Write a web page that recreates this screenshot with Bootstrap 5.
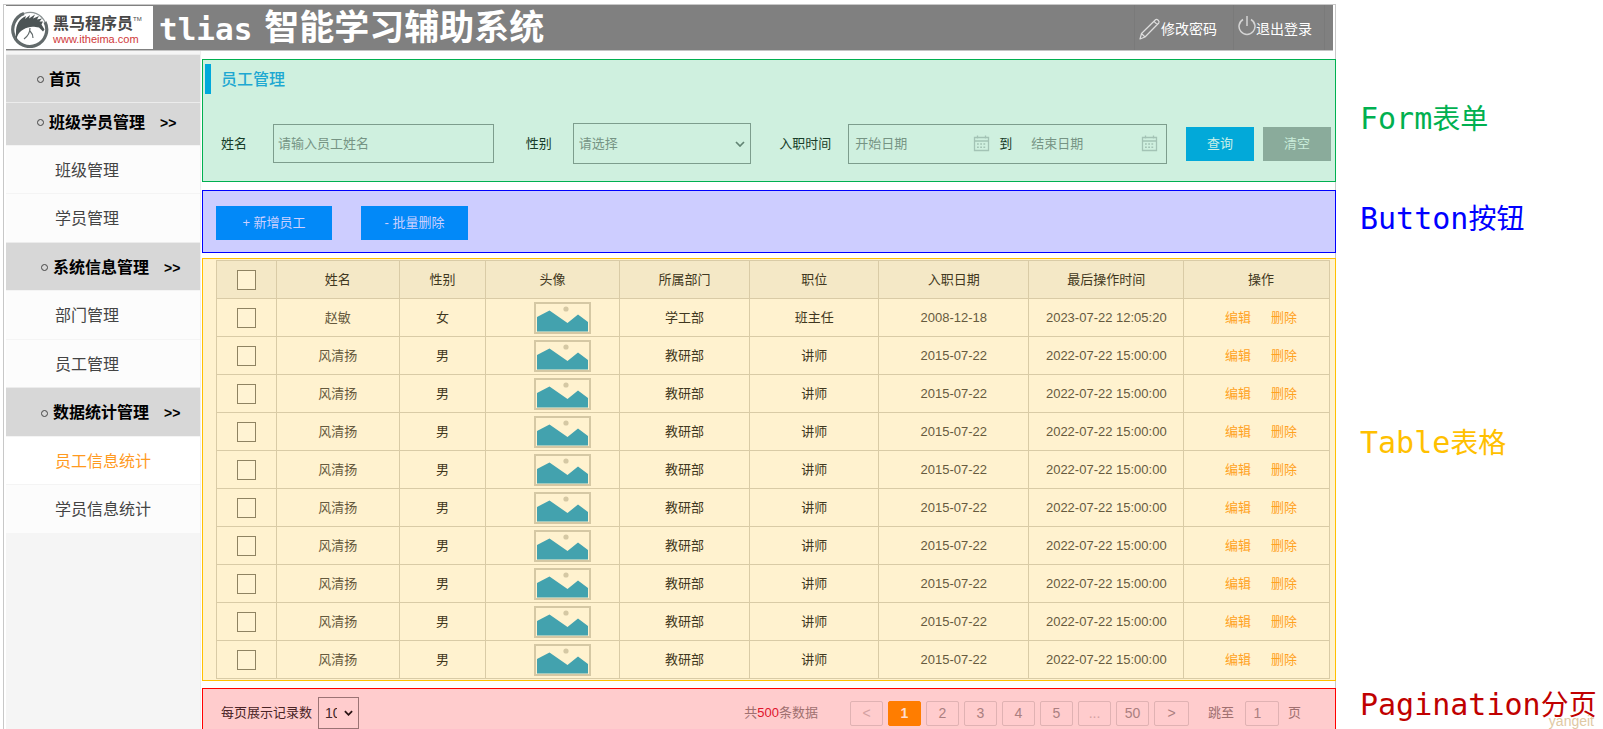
<!DOCTYPE html>
<html lang="zh-CN">
<head>
<meta charset="utf-8">
<meta name="viewport" content="width=device-width, initial-scale=1">
<title>tlias 智能学习辅助系统</title>
<link href="https://cdn.jsdelivr.net/npm/bootstrap@5.3.0/dist/css/bootstrap.min.css" rel="stylesheet">
<style>
  body { font-family: "Liberation Sans", "Noto Sans CJK SC", sans-serif; font-size: 13px; line-height: 20px; color: #222; background: #fff; }
  .frame { border: 1px solid #c8c8c8; border-bottom: 0; margin: 4px 0 0 3px; padding: 0 2px 0 2px; min-width: 0; }
  /* header */
  .topbar { background: #808080; height: 46px; border-bottom: 1px solid #c4c4c4; }
  .brand { background: #fff; width: 147px; padding: 2px 0 0 5px; gap: 4px; height: 43px; }
  .brand-name { font-size: 16px; line-height: 18px; font-weight: 700; color: #474747; padding-top: 4px; }
  .brand-name sup { font-size: 6px; font-weight: 400; top: -8px; }
  .brand-url { font-size: 11px; line-height: 13px; color: #cf3a3a; }
  .sys-title { color: #fff; font-weight: 700; font-size: 35px; line-height: 44px; margin-left: 6px; gap: 12px; }
  .sys-title .latin { font-family: "DejaVu Sans Mono", monospace; font-size: 31px; padding-top: 2px; }
  .top-link { color: #fff; font-size: 14px; text-decoration: none; border-left: 1px solid #7a7a7a; height: 45px; padding-top: 2px; }
  .top-link:hover { color: #fff; }
  /* sidebar */
  .side { width: 195px; background: #f5f5f5; border-right: 1px solid #eee; padding-top: 3px; }
  .side a { height: 48px; font-size: 16px; color: #444; text-decoration: none; padding: 2px 0 0 49px; background: #fcfcfc; border-top: 1px solid #f4f4f4; display: flex; align-items: center; }
  .side a:nth-child(even) { height: 49px; }
  .side a.head { background: #d7d7d7; color: #000; font-weight: 700; padding-left: 35px; border-top-color: #ececec; }
  .side a.head.outer { padding-left: 31px; }
  .side a.short { height: 43px; padding: 0 0 3px; }
  .side a.on { color: #ff9a1f; background: #fff; }
  .side .dot { width: 7px; height: 7px; border: 1px solid #444; border-radius: 50%; margin-right: 5px; }
  .side .more { margin-left: 15px; font-size: 14px; }
  /* panels */
  .main { min-width: 0; margin: 8px -3px 0 1px; }
  .panel { border: 1px solid; }
  .panel-form { background: #cff0df; border-color: #00b050; padding: 4px 4px 0 2px; height: 123px; }
  .panel-btn { background: #cdcdff; border-color: #00f; margin-top: 8px; padding: 15px 13px; height: 63px; gap: 29px; }
  .panel-table { background: #fff2cf; border-color: #ffc000; margin-top: 5px; padding: 1px 5px 1px 13px; }
  .panel-page { background: #ffcccd; border-color: #f00; border-bottom: 0; margin-top: 7px; padding: 8px 34px 0 18px; color: #a07070; }
  .title-bar { width: 6px; height: 30px; background: #00a9db; }
  .title-text { font-size: 16px; line-height: 32px; color: #1ea8d2; margin: 0 0 0 10px; }
  .query { padding: 27px 0 0 16px; }
  .query label { color: #173c28; flex: none; }
  .field { background: transparent; border: 1px solid #7d9d8d; border-radius: 0; color: #769484; padding: 0 5px; min-width: 0; outline: 0; }
  .field::placeholder, .dates input::placeholder { color: #769484; opacity: 1; }
  .name-field { flex: 1 1 220px; height: 39px; margin: 0 32px 0 26px; padding-left: 4px; }
  .sex-field { flex: 1 1 178px; height: 41px; margin: 0 28px 0 21px; padding-left: 5px; appearance: none;
    background: url("data:image/svg+xml,%3Csvg xmlns='http://www.w3.org/2000/svg' viewBox='0 0 10 6'%3E%3Cpath d='M1 1l4 4 4-4' fill='none' stroke='%23628474' stroke-width='1.7'/%3E%3C/svg%3E") right 5px center / 10px 6px no-repeat; }
  .dates { flex: 1 1 318px; height: 40px; margin: 0 19px 0 17px; padding: 0 8px 0 6px; }
  .dates input { background: none; border: 0; padding: 0; min-width: 0; flex: 1 1 118px; color: #769484; outline: 0; }
  .dates input + svg + label + input { flex-basis: 110px; }
  .dates label { margin: 0 19px 0 9px; }
  .flat { border: 0; border-radius: 0; font-size: 13px; line-height: 20px; height: 34px; padding: 0; flex: none; }
  .flat-q { background: #02a9d9; color: #c9f0e8; width: 68px; margin-right: 9px; }
  .flat-c { background: #8aab9b; color: #c9ecd9; width: 68px; }
  .flat-b { background: #0289f8; color: #cdd0ff; width: 116px; }
  .flat-b + .flat-b { width: 107px; }
  /* table */
  .grid { width: 100%; table-layout: fixed; border-collapse: collapse; color: #3f3720; text-align: center; }
  .grid th, .grid td { border: 1px solid #d9cba6; height: 38px; padding: 0; font-weight: 400; text-align: center; }
  .grid thead { background: #f4e8c6; }
  .grid .soft { color: #665a3e; }
  .grid td.pic { padding-left: 20px; }
  .grid svg { display: block; margin: 0 auto; }
  .grid .act { padding-left: 9px; }
  .grid a { color: #ffa21f; text-decoration: none; }
  .grid a + a { margin-left: 20px; }
  .box { appearance: none; width: 19px; height: 20px; border: 1px solid #8f8362; background: #fff3d3; display: block; margin: 0 auto; }
  .box:checked { background: #8f8362; }
  /* pagination */
  .size { width: 41px; height: 32px; margin-left: 6px; padding: 0 21px 0 6px; font-size: 14px; color: #41282a; border-color: #9b7374; appearance: none;
    background: url("data:image/svg+xml,%3Csvg xmlns='http://www.w3.org/2000/svg' viewBox='0 0 10 6'%3E%3Cpath d='M1 1l4 4 4-4' fill='none' stroke='%232a1415' stroke-width='2'/%3E%3C/svg%3E") right 5px center / 9px 6px no-repeat; }
  .pager { gap: 5px; margin: 0 19px 0 32px; }
  .pager .page-item .page-link { width: 33px; height: 25px; padding: 0; border: 1px solid #e0b2b3; border-radius: 2px; background: none; color: #ab7f80; text-align: center; line-height: 23px; font-size: 14px; margin: 0; box-shadow: none; }
  .pager .page-item:last-child .page-link { width: 35px; }
  .pager .page-item.active .page-link { background: #ff7d00; border-color: #ff7d00; color: #ffdccd; font-weight: 700; }
  .pager .page-item .dim { color: #d3a1a2; }
  .jump { width: 34px; height: 25px; border: 1px solid #e0b2b3; border-radius: 2px; background: none; color: #ab7f80; text-align: center; padding: 0 9px 0 0; margin: 0 9px 0 11px; font-size: 14px; }
  /* notes beside the frame */
  .notes { width: 267px; flex: none; padding: 97px 0 0 24px; font-family: "Noto Sans CJK SC", sans-serif; font-size: 28px; line-height: 40px; white-space: nowrap; }
  .notes > div { height: 40px; }
  .notes .latin { font-family: "DejaVu Sans Mono", monospace; font-size: 30px; font-weight: 400; }
  .note-form { color: #00b050; margin-bottom: 60px; }
  .note-btn { color: #00f; margin-bottom: 184px; }
  .note-table { color: #ffc000; margin-bottom: 222px; }
  .note-page { color: #c00000; position: relative; }
  .sign { position: absolute; right: 9px; bottom: -8px; font: 14px/20px "Liberation Sans", sans-serif; color: #e0c9a4; }
</style>
</head>
<body>
<svg width="0" height="0" class="position-absolute" aria-hidden="true">
  <symbol id="pic" viewBox="0 0 57 32">
    <rect x="1" y="1" width="55" height="30" fill="#fff2cf" stroke="#d5c8a4" stroke-width="2"/>
    <circle cx="32" cy="7" r="2.6" fill="#d5c8a4"/>
    <path d="M3 15L15.500 8.500 33.500 21 44 12.500 54 20V29.500H3z" fill="#43a2ae"/>
  </symbol>
  <symbol id="cal" viewBox="0 0 17 17">
    <path d="M1.500 2.500h14v13h-14zM1.500 6h14M4.500 .5v3M12.500 .5v3" fill="none" stroke="#a3c3b5" stroke-width="1.300"/>
    <path d="M4 9h9.500M4 12.300h9.500" stroke="#a3c3b5" stroke-width="1.600" stroke-dasharray="1.800 1.400"/>
  </symbol>
</svg>

<div class="d-flex min-vh-100">
  <div class="frame flex-grow-1 d-flex flex-column">
    <header class="topbar d-flex align-items-center">
      <div class="brand d-flex align-items-center">
        <svg width="38" height="38" viewBox="0 0 38 38" class="flex-shrink-0" role="img" aria-label="黑马程序员">
          <path d="M13 3.500A17 17 0 1 0 34 12" fill="none" stroke="#626a6b" stroke-width="3.200"/>
          <path d="M13 3.500C22 .5 30 4 34 12" fill="none" stroke="#8d9495" stroke-width="1.200"/>
          <path d="M5 22C5 15 8 9 15 6l-1 3 5-4-1 3.500 6-4-2 4 6-2.500-2 3.500 5-1-2.500 3 3.500 0-1.500 3 3 5-1.500 2-4-4c-5-1-8-1-11 0-7 2-11 6-12 14C5.500 28 4.500 26 5 22z" fill="#4c5455"/>
          <path d="M19 18c0 4-2 8-6 11M19 21c2 2 3 4 3 7" fill="none" stroke="#626a6b" stroke-width="1.200"/>
        </svg>
        <div>
          <div class="brand-name text-nowrap">黑马程序员<sup>TM</sup></div>
          <div class="brand-url">www.itheima.com</div>
        </div>
      </div>
      <h1 class="sys-title d-flex align-items-center mb-0 text-nowrap"><span class="latin">tlias</span><span>智能学习辅助系统</span></h1>
      <a href="#" class="top-link d-flex align-items-center ms-auto text-nowrap pe-3 ps-1">
        <svg width="22" height="22" viewBox="0 0 22 22" fill="none" stroke="#dedede" stroke-width="1.200" stroke-linejoin="round"><path d="M1 21l1.500-5.500L16.500 1.800c1.500-1.300 4.500 1.500 3.300 3.200L6 19zM2.500 15.500L6 19M15 3.300l3.300 3.400"/></svg>
        <span>修改密码</span>
      </a>
      <a href="#" class="top-link d-flex align-items-center text-nowrap ps-1">
        <svg width="18" height="21" viewBox="0 0 18 21" fill="none" stroke="#d4d4d4" stroke-width="1.500" class="mb-1"><path d="M9 0v10M5 3.500A8 8 0 1 0 13 3.500"/></svg>
        <span class="pe-2 me-1">退出登录</span>
      </a>
      <div class="top-link ps-1 pe-1"></div>
    </header>

    <div class="d-flex flex-grow-1">
      <nav class="side flex-shrink-0">
        <a href="#" class="head outer"><span class="dot"></span>首页</a>
        <a href="#" class="head outer short"><span class="dot"></span>班级学员管理<span class="more">&gt;&gt;</span></a>
        <a href="#">班级管理</a>
        <a href="#">学员管理</a>
        <a href="#" class="head"><span class="dot"></span>系统信息管理<span class="more">&gt;&gt;</span></a>
        <a href="#">部门管理</a>
        <a href="#">员工管理</a>
        <a href="#" class="head"><span class="dot"></span>数据统计管理<span class="more">&gt;&gt;</span></a>
        <a href="#" class="on">员工信息统计</a>
        <a href="#">学员信息统计</a>
      </nav>

      <main class="main flex-grow-1 d-flex flex-column">
        <form class="panel panel-form">
          <div class="d-flex"><span class="title-bar"></span><h2 class="title-text">员工管理</h2></div>
          <div class="query d-flex align-items-center">
            <label for="name">姓名</label>
            <input id="name" class="field name-field" type="text" placeholder="请输入员工姓名">
            <label for="sex">性别</label>
            <select id="sex" class="field sex-field"><option>请选择</option><option>男</option><option>女</option></select>
            <label for="from">入职时间</label>
            <div class="field dates d-flex align-items-center">
              <input id="from" type="text" placeholder="开始日期">
              <svg width="17" height="17" class="flex-shrink-0"><use href="#cal"/></svg>
              <label for="to">到</label>
              <input id="to" type="text" placeholder="结束日期">
              <svg width="17" height="17" class="flex-shrink-0"><use href="#cal"/></svg>
            </div>
            <button type="button" class="btn flat flat-q">查询</button>
            <button type="reset" class="btn flat flat-c">清空</button>
          </div>
        </form>

        <section class="panel panel-btn d-flex">
          <button type="button" class="btn flat flat-b">+ 新增员工</button>
          <button type="button" class="btn flat flat-b">- 批量删除</button>
        </section>

        <section class="panel panel-table">
          <table class="grid">
            <colgroup><col style="width:5.4%"><col style="width:11%"><col style="width:7.8%"><col style="width:12%"><col style="width:11.7%"><col style="width:11.6%"><col style="width:13.500%"><col style="width:13.900%"><col style="width:13.100%"></colgroup>
            <thead>
              <tr><th><input type="checkbox" class="box" aria-label="全选"></th><th>姓名</th><th>性别</th><th>头像</th><th>所属部门</th><th>职位</th><th>入职日期</th><th>最后操作时间</th><th class="act">操作</th></tr>
            </thead>
            <tbody id="rows"></tbody>
          </table>
        </section>

        <section class="panel panel-page flex-grow-1 d-flex align-items-start">
          <div class="d-flex align-items-center w-100">
            <label for="size" class="text-nowrap" style="color:#4a2426">每页展示记录数</label>
            <select id="size" class="field size"><option>10</option><option>20</option></select>
            <span class="ms-auto text-nowrap">共<span style="color:#e0142c">500</span>条数据</span>
            <ul class="pagination pager mb-0">
              <li class="page-item"><a class="page-link dim" href="#">&lt;</a></li>
              <li class="page-item active"><a class="page-link" href="#">1</a></li>
              <li class="page-item"><a class="page-link" href="#">2</a></li>
              <li class="page-item"><a class="page-link" href="#">3</a></li>
              <li class="page-item"><a class="page-link" href="#">4</a></li>
              <li class="page-item"><a class="page-link" href="#">5</a></li>
              <li class="page-item"><a class="page-link dim" href="#">...</a></li>
              <li class="page-item"><a class="page-link" href="#">50</a></li>
              <li class="page-item"><a class="page-link" href="#">&gt;</a></li>
            </ul>
            <label for="jump" class="text-nowrap">跳至</label>
            <input id="jump" class="jump" type="text" value="1">
            <span>页</span>
          </div>
        </section>
      </main>
    </div>
  </div>

  <aside class="notes">
    <div class="note-form"><span class="latin">Form</span>表单</div>
    <div class="note-btn"><span class="latin">Button</span>按钮</div>
    <div class="note-table"><span class="latin">Table</span>表格</div>
    <div class="note-page"><span class="latin">Pagination</span>分页<span class="sign">yangeit</span></div>
  </aside>
</div>

<script src="https://cdn.jsdelivr.net/npm/bootstrap@5.3.0/dist/js/bootstrap.bundle.min.js"></script>
<script>
  const staff = [["赵敏", "女", "学工部", "班主任", "2008-12-18", "2023-07-22 12:05:20"]];
  for (let i = 0; i < 9; i++) staff.push(["风清扬", "男", "教研部", "讲师", "2015-07-22", "2022-07-22 15:00:00"]);
  document.getElementById("rows").innerHTML = staff.map(([name, sex, dept, job, hired, updated]) => `
    <tr><td><input type="checkbox" class="box" aria-label="${name}"></td>
      <td class="soft">${name}</td><td>${sex}</td>
      <td class="pic"><svg width="57" height="32"><use href="#pic"/></svg></td>
      <td>${dept}</td><td>${job}</td><td class="soft">${hired}</td><td class="soft">${updated}</td>
      <td class="act"><a href="#">编辑</a><a href="#">删除</a></td></tr>`).join("");
</script>
</body>
</html>
